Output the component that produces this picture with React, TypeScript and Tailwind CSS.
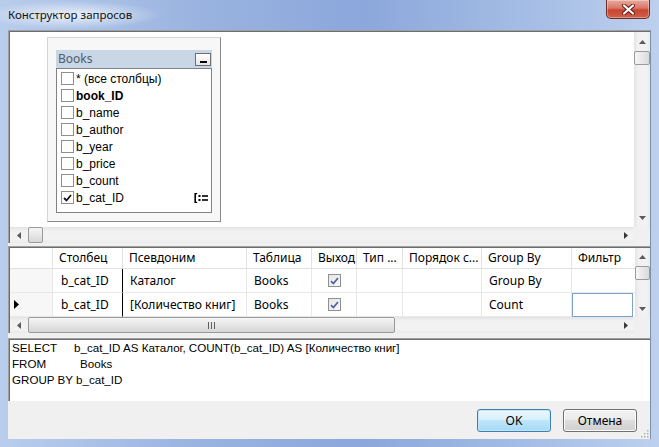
import React from "react";

function ArrowUp() {
  return (
    <svg width="7" height="4" viewBox="0 0 7 4">
      <path d="M0 4L3.5 0L7 4Z" fill="#5a5a5a" />
    </svg>
  );
}
function ArrowDown() {
  return (
    <svg width="7" height="4" viewBox="0 0 7 4">
      <path d="M0 0L3.5 4L7 0Z" fill="#5a5a5a" />
    </svg>
  );
}
function ArrowLeft() {
  return (
    <svg width="4" height="7" viewBox="0 0 4 7">
      <path d="M4 0L0 3.5L4 7Z" fill="#5a5a5a" />
    </svg>
  );
}
function ArrowRight() {
  return (
    <svg width="4" height="7" viewBox="0 0 4 7">
      <path d="M0 0L4 3.5L0 7Z" fill="#3a3a3a" />
    </svg>
  );
}

function Sunken({ className, children }: { className: string; children: React.ReactNode }) {
  return (
    <div className={className}>
      <div className="h-full border-l border-t border-[#6d6d6d] flex flex-col">{children}</div>
    </div>
  );
}

function Check13({ checked }: { checked?: boolean }) {
  return (
    <div className="w-[13px] h-[13px] border border-[#8e8f8f] bg-white flex items-center justify-center shrink-0">
      {checked && (
        <svg width="9" height="8" viewBox="0 0 9 8">
          <path d="M1 4L3.5 6.5L8 1" fill="none" stroke="#111" strokeWidth="1.8" />
        </svg>
      )}
    </div>
  );
}

function GridCheck() {
  return (
    <div className="w-[13px] h-[13px] border border-[#8e8f8f] bg-gradient-to-br from-[#e6e6e6] to-[#f7f7f7] flex items-center justify-center">
      <svg width="9" height="8" viewBox="0 0 9 8">
        <path d="M1 4.2L3.4 6.6L8 1" fill="none" stroke="#4b61a0" strokeWidth="1.7" />
      </svg>
    </div>
  );
}

const listItems: { name: string; bold?: boolean; checked?: boolean; group?: boolean }[] = [
  { name: "* (все столбцы)" },
  { name: "book_ID", bold: true },
  { name: "b_name" },
  { name: "b_author" },
  { name: "b_year" },
  { name: "b_price" },
  { name: "b_count" },
  { name: "b_cat_ID", checked: true, group: true },
];

function BooksBox() {
  return (
    <div className="absolute left-[37px] top-[5px] w-[174px] h-[185px] border border-[#d4d4d4] border-r-[#8a8a8a] border-b-[#8a8a8a] bg-[#f7f7f7] pt-[12px] px-[8px] flex flex-col">
      <div className="h-[18px] bg-[#c8d6e6] flex items-center shrink-0">
        <span className="pl-[2px] text-[12px] leading-[16px] text-[#4e5c6c]">Books</span>
        <div className="ml-auto mr-[1px] w-[16px] h-[13px] border border-[#6f6f6f] bg-gradient-to-b from-white to-[#e6e6e6] flex items-end justify-center pb-[2px]">
          <div className="w-[7px] h-[2px] bg-black" />
        </div>
      </div>
      <div className="h-[145px] border border-[#828282] bg-white pt-[1px] font-['Liberation_Sans',Arial,sans-serif] text-[12px]">
        {listItems.map((it) => (
          <div key={it.name} className="h-[17px] flex items-center pl-[4px] pr-[2px]">
            <Check13 checked={it.checked} />
            <span className={it.bold ? "ml-[2px] font-bold leading-[14px]" : "ml-[2px] leading-[14px]"}>{it.name}</span>
            {it.group && (
              <svg className="ml-auto mr-[1px]" width="14" height="10" viewBox="0 0 14 10">
                <path d="M3.2 0.5H1.2V9.5H3.2" fill="none" stroke="#000" strokeWidth="1.6" />
                <rect x="4.5" y="2" width="2" height="2" fill="#000" />
                <rect x="4.5" y="6" width="2" height="2" fill="#000" />
                <rect x="8" y="2.2" width="6" height="1.6" fill="#000" />
                <rect x="8" y="6.2" width="6" height="1.6" fill="#000" />
              </svg>
            )}
          </div>
        ))}
      </div>
    </div>
  );
}

const cols = ["", "Столбец", "Псевдоним", "Таблица", "Выход", "Тип ...", "Порядок с...", "Group By", "Фильтр"];

function DataRow({ current, alias, group }: { current?: boolean; alias: string; group: string }) {
  return (
    <div className="h-[24px] grid grid-cols-[43px_70px_124px_65px_45px_46px_79px_90px_63px] text-[12px]">
      <div className="bg-[#f7f7f7] border-r border-b border-[#e8e8e8] flex items-center pl-[4px]">
        {current && (
          <svg width="5" height="9" viewBox="0 0 5 9">
            <path d="M0 0L5 4.5L0 9Z" fill="#000" />
          </svg>
        )}
      </div>
      <div className="border-r border-r-black border-b border-b-[#e8e8e8] flex items-center pl-[8px]">b_cat_ID</div>
      <div className="border-r border-b border-[#e8e8e8] flex items-center pl-[7px] whitespace-nowrap">{alias}</div>
      <div className="border-r border-b border-[#e8e8e8] flex items-center pl-[7px]">Books</div>
      <div className="border-r border-b border-[#e8e8e8] flex items-center justify-center">
        <GridCheck />
      </div>
      <div className="border-r border-b border-[#e8e8e8]" />
      <div className="border-r border-b border-[#e8e8e8]" />
      <div className="border-r border-b border-[#e8e8e8] flex items-center pl-[7px]">{group}</div>
      {current ? (
        <div className="border border-[#7da2ce] mr-[2px] bg-white" />
      ) : (
        <div className="border-b border-[#e8e8e8]" />
      )}
    </div>
  );
}

export default function App() {
  return (
    <div className="w-[659px] h-[447px] flex flex-col overflow-hidden bg-[linear-gradient(90deg,#b9cdec,#9ab3e0_30%,#8ba7db_55%,#a7bfe6_82%,#bdd0ee)] font-['Noto_Sans',sans-serif] text-black">
      {/* title bar */}
      <div className="h-[30px] flex items-start relative shrink-0">
        <div className="absolute left-0 top-0 w-[240px] h-[30px] bg-[radial-gradient(ellipse_90px_14px_at_72px_15px,rgba(255,255,255,0.75),rgba(255,255,255,0))]" />
        <span className="relative ml-[8px] mt-[7px] text-[11.5px] leading-[16px] text-[#111]">Конструктор запросов</span>
        <div className="ml-auto mr-[9px] w-[44px] h-[19px] rounded-b-[5px] border border-t-0 border-[#6b2c26] bg-[linear-gradient(180deg,#e9aa9c,#d9776a_45%,#c8452f_55%,#d0604b)] flex items-center justify-center shadow-[inset_0_0_0_1px_rgba(255,255,255,0.35)]">
          <svg width="13" height="11" viewBox="0 0 13 11">
            <path d="M2 1.5L11 9.5M11 1.5L2 9.5" stroke="#5a1a12" strokeWidth="4" strokeLinecap="round" />
            <path d="M2 1.5L11 9.5M11 1.5L2 9.5" stroke="#fff" strokeWidth="2.2" strokeLinecap="round" />
          </svg>
        </div>
      </div>

      {/* client */}
      <div className="flex-1 mx-[8px] mb-[8px] bg-[#f0f0f0] flex flex-col border-r border-[#7d8ea8]">
        {/* diagram pane */}
        <Sunken className="h-[213px] shrink-0 border-l border-t border-[#a0a0a0]">
          <div className="flex flex-1 min-h-0">
            <div className="flex-1 bg-white relative">
              <BooksBox />
            </div>
            <div className="w-[16px] flex flex-col bg-[linear-gradient(90deg,#e4e4e4,#f1f1f1_25%,#f3f3f3_75%,#eaeaea)]">
              <div className="h-[19px] flex items-center justify-center shrink-0">
                <ArrowUp />
              </div>
              <div className="h-[14px] rounded-[2px] border border-[#9a9a9a] bg-gradient-to-r from-[#f6f6f6] to-[#dadada] shrink-0" />
              <div className="flex-1" />
              <div className="h-[18px] flex items-center justify-center shrink-0">
                <ArrowDown />
              </div>
            </div>
          </div>
          <div className="h-[16px] flex shrink-0">
            <div className="flex-1 flex bg-[linear-gradient(180deg,#e4e4e4,#f1f1f1_25%,#f3f3f3_75%,#eaeaea)]">
              <div className="w-[17px] flex items-center justify-center shrink-0">
                <ArrowLeft />
              </div>
              <div className="w-[15px] ml-[1px] rounded-[2px] border border-[#9a9a9a] bg-gradient-to-b from-[#f6f6f6] to-[#d8d8d8]" />
              <div className="flex-1" />
              <div className="w-[17px] flex items-center justify-center shrink-0">
                <ArrowRight />
              </div>
            </div>
            <div className="w-[16px] bg-[#f0f0f0]" />
          </div>
        </Sunken>

        <div className="h-[3px] shrink-0" />

        {/* grid pane */}
        <Sunken className="h-[87px] shrink-0 border-l border-t border-[#a0a0a0]">
          <div className="h-[69px] flex shrink-0">
            <div className="flex-1 bg-white flex flex-col">
              <div className="h-[21px] grid grid-cols-[43px_70px_124px_65px_45px_46px_79px_90px_63px] text-[12px] border-b border-[#e0e0e0]">
                {cols.map((c, i) => (
                  <div key={i} className={i === 8 ? "flex items-center pl-[6px]" : "border-r border-[#e3e3e3] flex items-center pl-[6px] whitespace-nowrap overflow-hidden"}>
                    {c}
                  </div>
                ))}
              </div>
              <DataRow alias="Каталог" group="Group By" />
              <DataRow current alias="[Количество книг]" group="Count" />
            </div>
            <div className="w-[16px] flex flex-col bg-[linear-gradient(90deg,#e4e4e4,#f1f1f1_25%,#f3f3f3_75%,#eaeaea)]">
              <div className="h-[17px] flex items-center justify-center shrink-0">
                <ArrowUp />
              </div>
              <div className="h-[14px] mt-[1px] rounded-[2px] border border-[#9a9a9a] bg-gradient-to-r from-[#f6f6f6] to-[#dadada] shrink-0" />
              <div className="flex-1" />
              <div className="h-[17px] flex items-center justify-center shrink-0">
                <ArrowDown />
              </div>
            </div>
          </div>
          <div className="h-[16px] flex shrink-0">
            <div className="flex-1 flex bg-[linear-gradient(180deg,#e4e4e4,#f1f1f1_25%,#f3f3f3_75%,#eaeaea)]">
              <div className="w-[17px] flex items-center justify-center shrink-0">
                <ArrowLeft />
              </div>
              <div className="w-[367px] ml-[1px] rounded-[2px] border border-[#9a9a9a] bg-gradient-to-b from-[#f6f6f6] to-[#d6d6d6] flex items-center justify-center gap-[2px]">
                <div className="w-[1px] h-[7px] bg-[#5f5f5f]" />
                <div className="w-[1px] h-[7px] bg-[#5f5f5f]" />
                <div className="w-[1px] h-[7px] bg-[#5f5f5f]" />
              </div>
              <div className="flex-1" />
              <div className="w-[17px] flex items-center justify-center shrink-0">
                <ArrowRight />
              </div>
            </div>
            <div className="w-[16px] bg-[#f0f0f0]" />
          </div>
        </Sunken>

        <div className="h-[5px] shrink-0" />

        {/* sql pane */}
        <Sunken className="h-[63px] shrink-0 border-l border-t border-[#a0a0a0]">
          <div className="flex-1 bg-white pl-[2px] font-['Liberation_Sans',Arial,sans-serif] text-[11.6px] leading-[16px] whitespace-nowrap">
            <div>
              <span className="inline-block w-[62px]">SELECT</span>b_cat_ID AS Каталог, COUNT(b_cat_ID) AS [Количество книг]
            </div>
            <div>
              <span className="inline-block w-[68px]">FROM</span>Books
            </div>
            <div>GROUP BY b_cat_ID</div>
          </div>
        </Sunken>

        {/* buttons */}
        <div className="flex-1 relative flex justify-end items-start pt-[8px] pr-[13px] gap-[12px] text-[12px]">
          <div className="w-[74px] h-[23px] rounded-[3px] border border-[#3c7fb1] bg-[linear-gradient(180deg,#eaf6fd,#d9f0fc_45%,#bee6fd_50%,#a7d9f5)] shadow-[inset_0_0_0_1px_#c5e6f8] flex items-center justify-center">
            OK
          </div>
          <div className="w-[74px] h-[23px] rounded-[3px] border border-[#707070] bg-[linear-gradient(180deg,#f2f2f2,#ebebeb_45%,#dddddd_50%,#cfcfcf)] shadow-[inset_0_0_0_1px_#fcfcfc] flex items-center justify-center">
            Отмена
          </div>
          <svg className="absolute right-[1px] bottom-[1px]" width="9" height="9" viewBox="0 0 9 9">
            <rect x="7" y="1" width="1.5" height="1.5" fill="#b0b0b0" />
            <rect x="4" y="4" width="1.5" height="1.5" fill="#b0b0b0" />
            <rect x="7" y="4" width="1.5" height="1.5" fill="#b0b0b0" />
            <rect x="1" y="7" width="1.5" height="1.5" fill="#b0b0b0" />
            <rect x="4" y="7" width="1.5" height="1.5" fill="#b0b0b0" />
            <rect x="7" y="7" width="1.5" height="1.5" fill="#b0b0b0" />
          </svg>
        </div>
      </div>
    </div>
  );
}
